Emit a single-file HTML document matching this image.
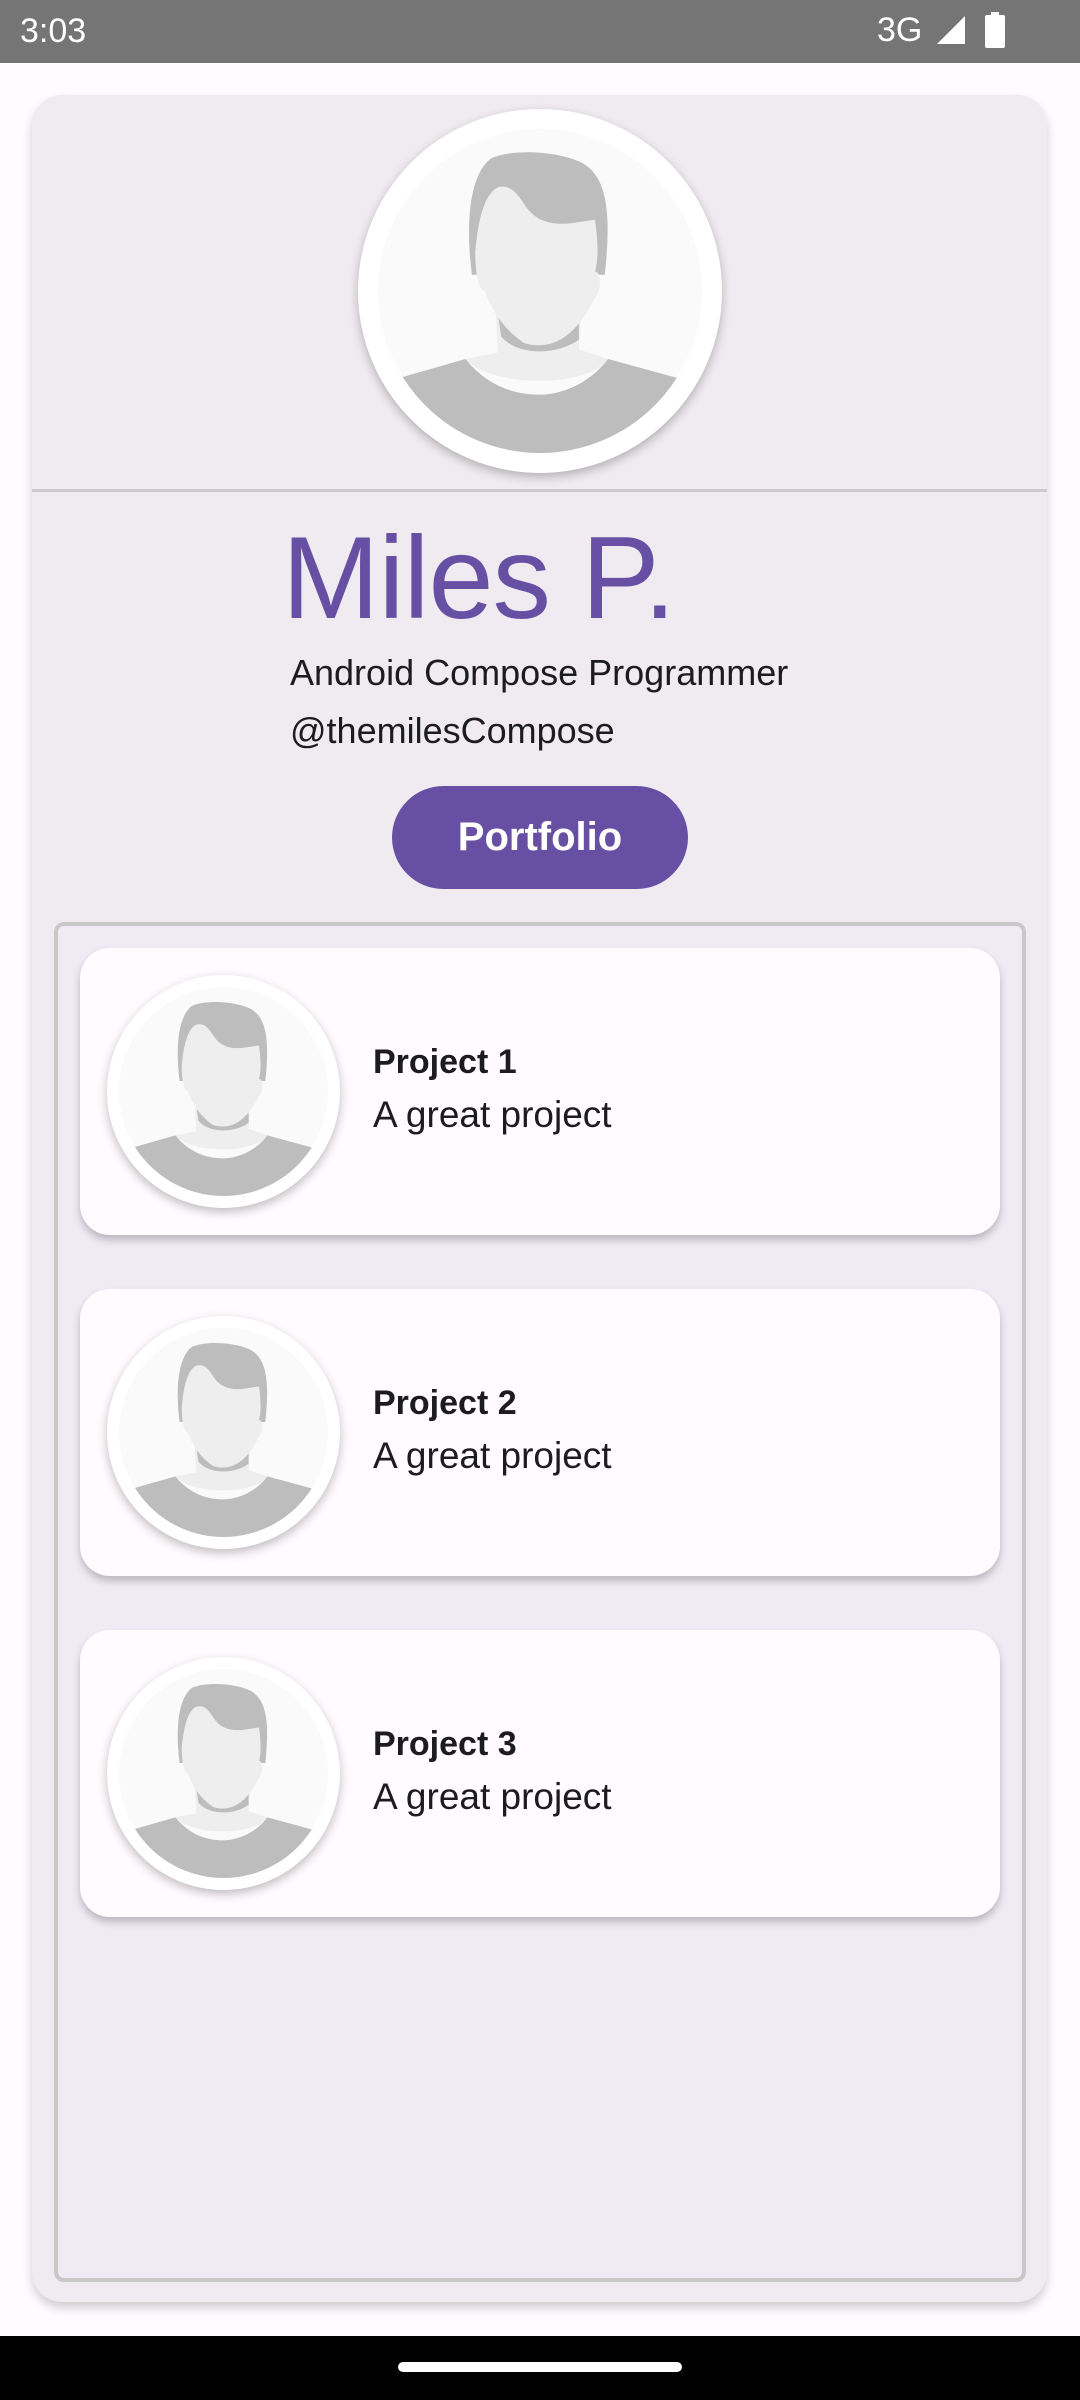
<!DOCTYPE html>
<html><head><meta charset="utf-8">
<style>
*{margin:0;padding:0;box-sizing:border-box}
body{width:1080px;height:2400px;background:#fffbfe;position:relative;overflow:hidden;font-family:"Liberation Sans",sans-serif}
.status{position:absolute;left:0;top:0;width:1080px;height:63px;background:#757575;color:#fff}
.status .t{position:absolute;left:20px;top:12px;font-size:34px}
.status .g{position:absolute;left:877px;top:11px;font-size:34px}
.outer{position:absolute;left:32px;top:95px;width:1015px;height:2207px;background:#efebf0;border-radius:30px;box-shadow:0 6px 10px rgba(0,0,0,.18)}
.divider{position:absolute;left:32px;top:489px;width:1015px;height:3px;background:#cdc9cf}
.av{position:absolute;border-radius:50%;background:#fff;box-shadow:0 4px 10px rgba(0,0,0,.25)}
.av svg{position:absolute}
.name{position:absolute;left:282px;top:510px;font-size:117px;color:#6750a4;letter-spacing:-1px}
.sub{position:absolute;left:290px;font-size:36px;color:#1c1b1f}
.btn{position:absolute;left:392px;top:786px;width:296px;height:103px;border-radius:52px;background:#6750a4;color:#fff;font-size:40px;font-weight:bold;text-align:center;line-height:103px}
.box{position:absolute;left:54px;top:922px;width:972px;height:1360px;border:4px solid #c8c8c8;border-radius:10px;background:#efebf5}
.card{position:absolute;left:80px;width:920px;height:287px;background:#fffbfe;border-radius:30px;box-shadow:0 5px 8px rgba(0,0,0,.22)}
.card .tt{position:absolute;left:293px;top:95px;font-size:34px;font-weight:bold;color:#1c1b1f}
.card .ds{position:absolute;left:293px;top:146px;font-size:37px;color:#1c1b1f}
.nav{position:absolute;left:0;top:2336px;width:1080px;height:64px;background:#000}
.pill{position:absolute;left:398px;top:2362px;width:284px;height:10px;border-radius:5px;background:#fff}
</style></head><body>
<svg width="0" height="0" style="position:absolute">
<defs>
<clipPath id="cc"><circle cx="50" cy="50" r="50"/></clipPath>
<g id="person">
<g clip-path="url(#cc)">
<rect width="100" height="100" fill="#fafafa"/>
<path d="M36,50 L37,69 L27,71 C35,80 65,80 71,71 L62,68 L63,50 Z" fill="#eeeeee"/>
<path d="M37,57 C42,66 56,66 62,59 L62,65 C55,70 43,70 38,64 Z" fill="#bdbdbd"/>
<path d="M6,77 L27,71 C35,81 45,82 50,82 C56,82 65,79 71,71 L93,77 L100,100 L0,100 Z" fill="#bdbdbd"/>
<path d="M29,45 C27,30 28,14 35,9 C42,6 55,7 62,10 C71,14 72,26 70,45 L67,45 L31,45 Z" fill="#bdbdbd"/>
<path d="M30,38 C31,27 33,20 37,18 C41,17 43,20 45,23 C48,28 53,30 60,29 L67,28 C68,36 68,40 67,44 C69,44 69,50 67,52 C64,58 60,64 54,66 C51,67 48,67 45,66 C39,62 35,56 33,50 C31,50 30,44 30,38 Z" fill="#eeeeee"/>
</g>
</g>
</defs>
</svg>
<div class="status"><span class="t">3:03</span><span class="g">3G</span>
<svg style="position:absolute;left:935px;top:14px" width="32" height="32" viewBox="0 0 32 32"><path d="M30,2 L30,30 L2,30 Z" fill="#fff"/></svg>
<svg style="position:absolute;left:985px;top:12px" width="20" height="36" viewBox="0 0 20 36"><rect x="6" y="0" width="8" height="4" fill="#fff"/><rect x="0" y="3" width="20" height="33" rx="2" fill="#fff"/></svg>
</div>
<div class="outer"></div>
<div class="av" style="left:358px;top:109px;width:364px;height:364px"><svg style="left:20px;top:20px" width="324" height="324" viewBox="0 0 100 100"><use href="#person"/></svg></div>
<div class="divider"></div>
<div class="name">Miles P.</div>
<div class="sub" style="top:652px">Android Compose Programmer</div>
<div class="sub" style="top:710px">@themilesCompose</div>
<div class="btn">Portfolio</div>
<div class="box"></div>
<div class="card" style="top:948px"><div class="av" style="left:27px;top:27px;width:233px;height:233px"><svg style="left:12px;top:12px" width="209" height="209" viewBox="0 0 100 100"><use href="#person"/></svg></div><div class="tt">Project 1</div><div class="ds">A great project</div></div>
<div class="card" style="top:1289px"><div class="av" style="left:27px;top:27px;width:233px;height:233px"><svg style="left:12px;top:12px" width="209" height="209" viewBox="0 0 100 100"><use href="#person"/></svg></div><div class="tt">Project 2</div><div class="ds">A great project</div></div>
<div class="card" style="top:1630px"><div class="av" style="left:27px;top:27px;width:233px;height:233px"><svg style="left:12px;top:12px" width="209" height="209" viewBox="0 0 100 100"><use href="#person"/></svg></div><div class="tt">Project 3</div><div class="ds">A great project</div></div>
<div class="nav"></div><div class="pill"></div>
</body></html>
